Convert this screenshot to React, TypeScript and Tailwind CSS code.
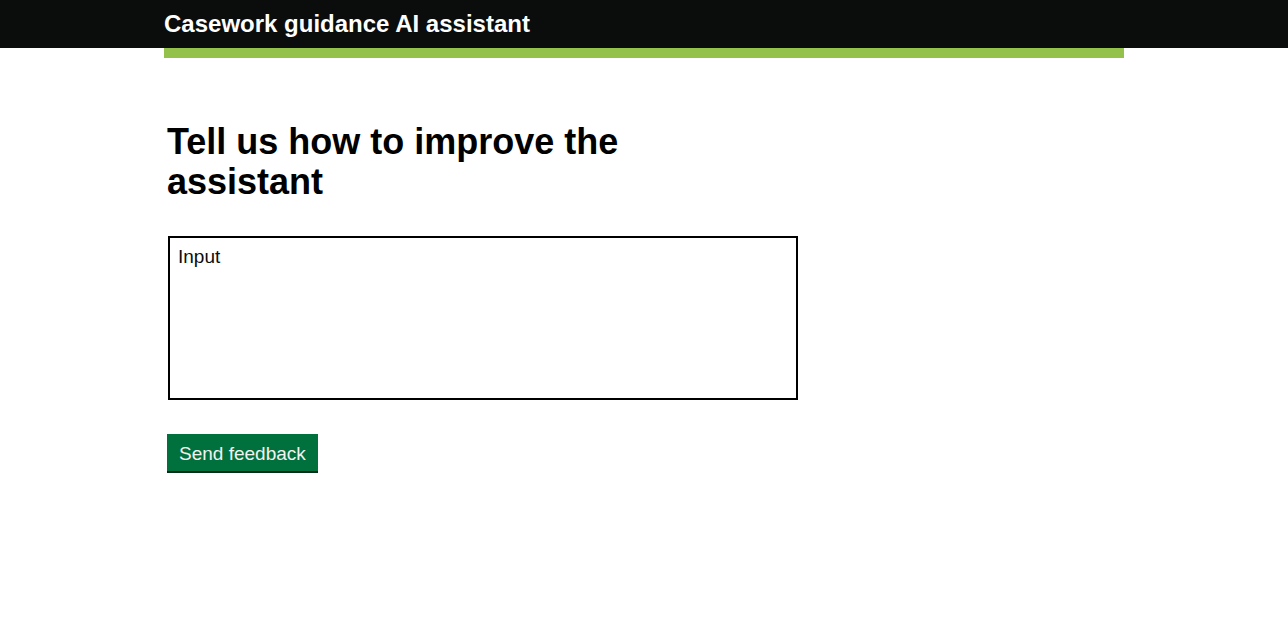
import React from "react";

export default function App() {
  return (
    <div className="min-h-screen bg-white font-['Liberation_Sans',Arial,sans-serif] text-[#0b0c0c]">
      <header className="bg-[#0b0c0c]">
        <div className="ml-[164px] w-[960px] h-[48px] flex items-center">
          <span className="text-white font-bold text-[24px] leading-none">
            Casework guidance AI assistant
          </span>
        </div>
      </header>
      <div className="ml-[164px] w-[960px] h-[10px] bg-[#94c149]" />

      <main className="ml-[167px] w-[640px] pt-[64px]">
        <h1 className="text-[36px] leading-[40px] font-bold text-black max-w-[520px]">
          Tell us how to improve the assistant
        </h1>

        <textarea
          className="mt-[34px] ml-px block w-[630px] h-[164px] border-2 border-black px-[8px] py-[7px] text-[19px] leading-[24px] text-[#0b0c0c] resize-none outline-none placeholder:text-[#0b0c0c]"
          placeholder="Input"
        />

        <button className="mt-[34px] block h-[37px] px-[12px] pt-[2px] bg-[#00703c] text-[#f3f2f1] text-[19px] leading-none shadow-[0_2px_0_#002d18]">
          Send feedback
        </button>
      </main>
    </div>
  );
}
